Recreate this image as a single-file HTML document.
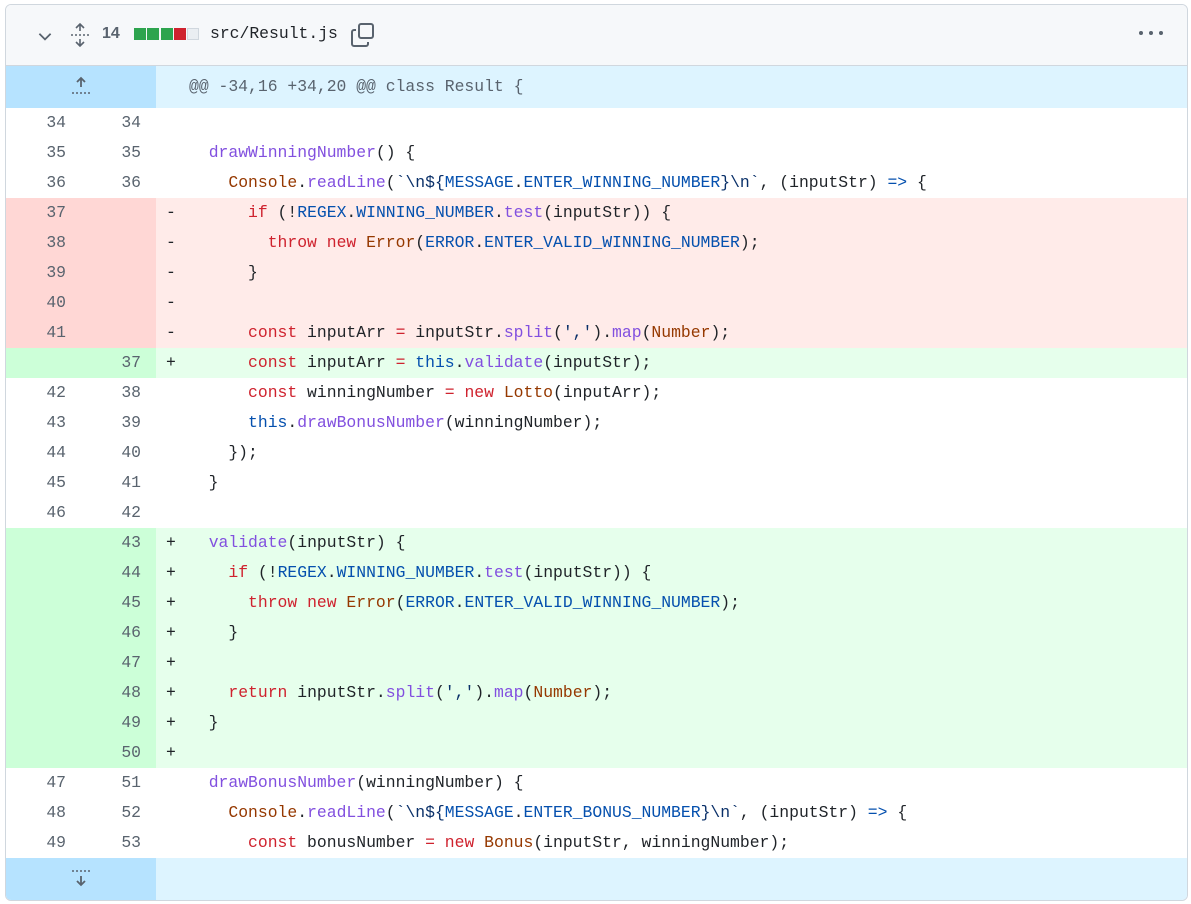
<!DOCTYPE html>
<html><head><meta charset="utf-8"><style>
*{margin:0;padding:0;box-sizing:border-box}
body{width:1191px;height:904px;background:#fff;font-family:"Liberation Sans",sans-serif;position:relative;overflow:hidden}
.box{position:absolute;left:5px;top:4px;width:1183px;height:897px;border:1px solid #d0d7de;border-radius:6px;overflow:hidden}
.hdr{height:61px;background:#f6f8fa;border-bottom:1px solid #d0d7de;position:relative}
.hdr *{position:absolute}
.row{height:30px;display:flex;font-family:"Liberation Mono",monospace;font-size:16.4px;line-height:30px;white-space:pre;color:#1f2328}
.o,.n{width:75px;text-align:right;padding-right:15px;color:#59636e;flex:none}
.n{padding-right:15px}
.m{width:33px;padding-left:10px;flex:none}
.c{flex:1}
.del{background:#ffebe9}.del .o,.del .n{background:#ffd7d5}
.add{background:#e6ffec}.add .o,.add .n{background:#ccffd8}
.hunk{height:42px;line-height:42px;background:#ddf4ff;color:#59636e}
.hunk .g{width:150px;background:#b6e3ff;flex:none;position:relative}
.k{color:#cf222e}.f{color:#8250df}.b{color:#0550ae}.s{color:#0a3069}.e{color:#953800}
</style></head><body>
<div class="box">
<div class="hdr">
<svg style="left:30px;top:22px" width="18" height="18" viewBox="0 0 16 16"><path d="M3 6l5 5 5-5" fill="none" stroke="#59636e" stroke-width="1.6"/></svg>
<svg style="left:63px;top:18px" width="22" height="24" viewBox="0 0 22 24"><path d="M11 1v7M7 5l4-4 4 4M11 23v-7M7 19l4 4 4-4" fill="none" stroke="#59636e" stroke-width="1.6"/><path d="M2 12h2M6 12h2M10 12h2M14 12h2M18 12h2" stroke="#59636e" stroke-width="1.6"/></svg>
<span style="left:96px;top:20px;font-weight:bold;font-size:16px;color:#59636e">14</span>
<span style="left:128px;top:23px;width:12px;height:12px;background:#2da44e"></span>
<span style="left:141px;top:23px;width:12px;height:12px;background:#2da44e"></span>
<span style="left:155px;top:23px;width:12px;height:12px;background:#2da44e"></span>
<span style="left:168px;top:23px;width:12px;height:12px;background:#cf222e"></span>
<span style="left:181px;top:23px;width:12px;height:12px;background:#eaeef2;border:1px solid #d0d7de"></span>
<span style="left:204px;top:19px;font-family:'Liberation Mono',monospace;font-size:16.4px;color:#1f2328">src/Result.js</span>
<svg style="left:344px;top:17px" width="26" height="26" viewBox="0 0 26 26"><rect x="9" y="2" width="14" height="14" rx="2" fill="none" stroke="#59636e" stroke-width="2"/><path d="M6 8H4a2 2 0 0 0-2 2v12a2 2 0 0 0 2 2h12a2 2 0 0 0 2-2v-2" fill="none" stroke="#59636e" stroke-width="2"/></svg>
<span style="left:1133px;top:26px;width:4px;height:4px;border-radius:2px;background:#59636e"></span>
<span style="left:1143px;top:26px;width:4px;height:4px;border-radius:2px;background:#59636e"></span>
<span style="left:1153px;top:26px;width:4px;height:4px;border-radius:2px;background:#59636e"></span>
</div>
<div class="row hunk"><div class="g"><svg style="position:absolute;left:64px;top:10px" width="22" height="20" viewBox="0 0 22 20"><path d="M11 2v9M7 6l4-4 4 4" fill="none" stroke="#59636e" stroke-width="1.8"/><path d="M2 17h2M6 17h2M10 17h2M14 17h2M18 17h2" stroke="#59636e" stroke-width="1.6"/></svg></div><div class="c" style="padding-left:33px">@@ -34,16 +34,20 @@ class Result {</div></div>
<div class="row"><div class="o">34</div><div class="n">34</div><div class="m"> </div><div class="c"></div></div>
<div class="row"><div class="o">35</div><div class="n">35</div><div class="m"> </div><div class="c">  <span class="f">drawWinningNumber</span>() {</div></div>
<div class="row"><div class="o">36</div><div class="n">36</div><div class="m"> </div><div class="c">    <span class="e">Console</span>.<span class="f">readLine</span>(<span class="s">`\n${</span><span class="b">MESSAGE</span>.<span class="b">ENTER_WINNING_NUMBER</span><span class="s">}\n`</span>, (inputStr) <span class="b">=&gt;</span> {</div></div>
<div class="row del"><div class="o">37</div><div class="n"></div><div class="m">-</div><div class="c">      <span class="k">if</span> (!<span class="b">REGEX</span>.<span class="b">WINNING_NUMBER</span>.<span class="f">test</span>(inputStr)) {</div></div>
<div class="row del"><div class="o">38</div><div class="n"></div><div class="m">-</div><div class="c">        <span class="k">throw</span> <span class="k">new</span> <span class="e">Error</span>(<span class="b">ERROR</span>.<span class="b">ENTER_VALID_WINNING_NUMBER</span>);</div></div>
<div class="row del"><div class="o">39</div><div class="n"></div><div class="m">-</div><div class="c">      }</div></div>
<div class="row del"><div class="o">40</div><div class="n"></div><div class="m">-</div><div class="c"></div></div>
<div class="row del"><div class="o">41</div><div class="n"></div><div class="m">-</div><div class="c">      <span class="k">const</span> inputArr <span class="k">=</span> inputStr.<span class="f">split</span>(<span class="s">','</span>).<span class="f">map</span>(<span class="e">Number</span>);</div></div>
<div class="row add"><div class="o"></div><div class="n">37</div><div class="m">+</div><div class="c">      <span class="k">const</span> inputArr <span class="k">=</span> <span class="b">this</span>.<span class="f">validate</span>(inputStr);</div></div>
<div class="row"><div class="o">42</div><div class="n">38</div><div class="m"> </div><div class="c">      <span class="k">const</span> winningNumber <span class="k">=</span> <span class="k">new</span> <span class="e">Lotto</span>(inputArr);</div></div>
<div class="row"><div class="o">43</div><div class="n">39</div><div class="m"> </div><div class="c">      <span class="b">this</span>.<span class="f">drawBonusNumber</span>(winningNumber);</div></div>
<div class="row"><div class="o">44</div><div class="n">40</div><div class="m"> </div><div class="c">    });</div></div>
<div class="row"><div class="o">45</div><div class="n">41</div><div class="m"> </div><div class="c">  }</div></div>
<div class="row"><div class="o">46</div><div class="n">42</div><div class="m"> </div><div class="c"></div></div>
<div class="row add"><div class="o"></div><div class="n">43</div><div class="m">+</div><div class="c">  <span class="f">validate</span>(inputStr) {</div></div>
<div class="row add"><div class="o"></div><div class="n">44</div><div class="m">+</div><div class="c">    <span class="k">if</span> (!<span class="b">REGEX</span>.<span class="b">WINNING_NUMBER</span>.<span class="f">test</span>(inputStr)) {</div></div>
<div class="row add"><div class="o"></div><div class="n">45</div><div class="m">+</div><div class="c">      <span class="k">throw</span> <span class="k">new</span> <span class="e">Error</span>(<span class="b">ERROR</span>.<span class="b">ENTER_VALID_WINNING_NUMBER</span>);</div></div>
<div class="row add"><div class="o"></div><div class="n">46</div><div class="m">+</div><div class="c">    }</div></div>
<div class="row add"><div class="o"></div><div class="n">47</div><div class="m">+</div><div class="c"></div></div>
<div class="row add"><div class="o"></div><div class="n">48</div><div class="m">+</div><div class="c">    <span class="k">return</span> inputStr.<span class="f">split</span>(<span class="s">','</span>).<span class="f">map</span>(<span class="e">Number</span>);</div></div>
<div class="row add"><div class="o"></div><div class="n">49</div><div class="m">+</div><div class="c">  }</div></div>
<div class="row add"><div class="o"></div><div class="n">50</div><div class="m">+</div><div class="c"></div></div>
<div class="row"><div class="o">47</div><div class="n">51</div><div class="m"> </div><div class="c">  <span class="f">drawBonusNumber</span>(winningNumber) {</div></div>
<div class="row"><div class="o">48</div><div class="n">52</div><div class="m"> </div><div class="c">    <span class="e">Console</span>.<span class="f">readLine</span>(<span class="s">`\n${</span><span class="b">MESSAGE</span>.<span class="b">ENTER_BONUS_NUMBER</span><span class="s">}\n`</span>, (inputStr) <span class="b">=&gt;</span> {</div></div>
<div class="row"><div class="o">49</div><div class="n">53</div><div class="m"> </div><div class="c">      <span class="k">const</span> bonusNumber <span class="k">=</span> <span class="k">new</span> <span class="e">Bonus</span>(inputStr, winningNumber);</div></div>
<div class="row hunk"><div class="g"><svg style="position:absolute;left:64px;top:10px" width="22" height="20" viewBox="0 0 22 20"><path d="M2 3h2M6 3h2M10 3h2M14 3h2M18 3h2" stroke="#59636e" stroke-width="1.6"/><path d="M11 8v9M7 13l4 4 4-4" fill="none" stroke="#59636e" stroke-width="1.8"/></svg></div><div class="c"></div></div>
</div>
</body></html>
